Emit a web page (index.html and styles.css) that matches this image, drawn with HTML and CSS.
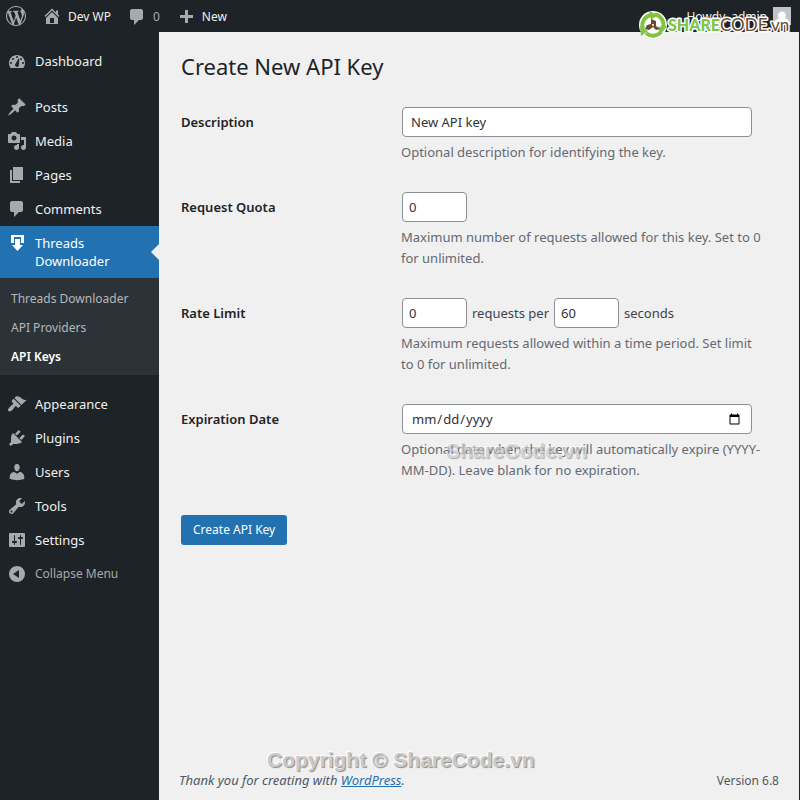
FILE: index.html
```
<!DOCTYPE html>
<html lang="en">
<head>
<meta charset="utf-8">
<title>Create New API Key</title>
<link rel="stylesheet" href="styles.css">
</head>
<body>
<header class="bar">
  <a class="bar-item" href="#" aria-label="About WordPress"><svg class="icon" viewBox="0 0 20 20"><path d="M20 10c0-5.51-4.49-10-10-10C4.48 0 0 4.49 0 10c0 5.52 4.48 10 10 10 5.51 0 10-4.48 10-10zM7.78 15.37L4.37 6.22c.55-.02 1.17-.08 1.17-.08.5-.06.44-1.13-.06-1.11 0 0-1.45.11-2.37.11-.18 0-.37 0-.58-.01C4.12 2.69 6.87 1.11 10 1.11c2.33 0 4.45.87 6.05 2.34-.68-.11-1.65.39-1.65 1.58 0 .74.45 1.36.9 2.1.35.61.55 1.36.55 2.46 0 1.49-1.4 5-1.4 5l-3.03-8.37c.54-.02.82-.17.82-.17.5-.05.44-1.25-.06-1.22 0 0-1.44.12-2.38.12-.87 0-2.33-.12-2.33-.12-.5-.03-.56 1.2-.06 1.22l.92.08 1.26 3.41zM17.41 10c.24-.64.74-1.87.43-4.25.7 1.29 1.05 2.71 1.05 4.25 0 3.29-1.73 6.24-4.4 7.78.97-2.59 1.94-5.2 2.92-7.78zM6.1 18.09C3.12 16.65 1.11 13.53 1.11 10c0-1.3.23-2.48.72-3.59C3.25 10.3 4.67 14.2 6.1 18.09zm4.03-6.63l2.58 6.98c-.86.29-1.76.45-2.71.45-.79 0-1.57-.11-2.29-.33.81-2.38 1.62-4.74 2.42-7.1z"/></svg></a>
  <a class="bar-item" href="#"><svg class="icon" viewBox="0 0 20 20"><path fill-rule="evenodd" d="M16 8.5l1.53 1.53-1.06 1.06L10 4.6l-6.47 6.49-1.06-1.06L10 2.5l4 4v-2h2v4zm-6-2.46l6 5.99V18H4v-5.97zM12 17v-5H8v5h4z"/></svg>Dev WP</a>
  <a class="bar-item bar-count" href="#"><svg class="icon" viewBox="0 0 20 20"><path d="M5 3h9c1.1 0 2 .9 2 2v7c0 1.1-.9 2-2 2h-2l-5 5v-5H5c-1.1 0-2-.9-2-2V5c0-1.1.9-2 2-2z"/></svg>0</a>
  <a class="bar-item" href="#"><svg class="icon" viewBox="0 0 20 20"><path d="M17 9v3h-5v5H9v-5H4V9h5V4h3v5h5z"/></svg>New</a>
  <a class="bar-item bar-user" href="#">Howdy, admin<svg class="avatar" viewBox="0 0 18 18"><path fill="#c3c4c7" d="M0 0h18v18H0z"/><path fill="#fff" d="M1 18c0-4 2-6 5-6.500C4.500 10 4.500 4.500 9 4.500s4.500 5.500 3 7c3 .5 5 2.500 5 6.500z"/></svg></a>
</header>
<div class="layout">
  <nav class="menu">
    <a class="menu-item" href="#"><svg class="icon" viewBox="0 0 20 20"><path fill-rule="evenodd" d="M3.760 17h12.480C17.340 15.630 18 13.900 18 12c0-4.410-3.580-8-8-8s-8 3.590-8 8c0 1.900.66 3.630 1.760 5zM9 6a1 1 0 1 1 2 0 1 1 0 0 1-2 0zM5 8a1 1 0 1 1 2 0 1 1 0 0 1-2 0zM13 8a1 1 0 1 1 2 0 1 1 0 0 1-2 0zM3 12a1 1 0 1 1 2 0 1 1 0 0 1-2 0zM15 12a1 1 0 1 1 2 0 1 1 0 0 1-2 0zM11.500 7.500l.8.300-.4 6.200c0 1.200-.8 2-1.900 2s-2-.8-2-1.900c0-.6.300-1.100.7-1.500z"/></svg>Dashboard</a>
    <a class="menu-item spaced" href="#"><svg class="icon" viewBox="0 0 20 20"><path d="M10.440 3.020l1.820-1.820 6.360 6.350-1.830 1.820c-1.050-.68-2.480-.57-3.410.36l-.75.75c-.92.93-1.040 2.350-.35 3.410l-1.830 1.820-2.410-2.410-2.800 2.790c-.42.42-3.380 2.710-3.800 2.290s1.860-3.390 2.280-3.810l2.790-2.790L4.100 9.360l1.830-1.820c1.050.69 2.480.57 3.400-.36l.75-.75c.93-.92 1.050-2.350.36-3.410z"/></svg>Posts</a>
    <a class="menu-item" href="#"><svg class="icon" viewBox="0 0 20 20"><path fill-rule="evenodd" d="M13 11V4c0-.55-.45-1-1-1h-1.670L9 1H5L3.670 3H2c-.55 0-1 .45-1 1v7c0 .55.45 1 1 1h10c.55 0 1-.45 1-1zM7 4.500c1.380 0 2.500 1.120 2.500 2.500S8.380 9.500 7 9.500 4.500 8.380 4.500 7 5.620 4.500 7 4.500zM14 6h5v10.500c0 1.380-1.120 2.500-2.500 2.500S14 17.880 14 16.500s1.120-2.500 2.500-2.500c.17 0 .34.020.5.050V9h-3zM10 13h2v3.500c0 1.380-1.120 2.500-2.500 2.500S7 17.880 7 16.500 8.120 14 9.500 14c.17 0 .34.020.5.050z"/></svg>Media</a>
    <a class="menu-item" href="#"><svg class="icon" viewBox="0 0 20 20"><path d="M6 15V2h10v13H6zm-1 1h8v2H3V5h2v11z"/></svg>Pages</a>
    <a class="menu-item" href="#"><svg class="icon" viewBox="0 0 20 20"><path d="M5 2h9c1.100 0 2 .9 2 2v7c0 1.100-.9 2-2 2h-2l-5 5v-5H5c-1.100 0-2-.9-2-2V4c0-1.100.9-2 2-2z"/></svg>Comments</a>
    <a class="menu-item current" href="#"><svg class="icon" viewBox="0 0 20 20"><path d="M4 2h13v8h-3V4H7v6H4z"/><path d="M8 6h5v6h3l-5.500 6L5 12h3z"/></svg>Threads Downloader</a>
    <div class="submenu">
      <a href="#">Threads Downloader</a>
      <a href="#">API Providers</a>
      <a class="active" href="#">API Keys</a>
    </div>
    <a class="menu-item spaced" href="#"><svg class="icon" viewBox="0 0 20 20"><path d="M14.480 11.060L7.410 3.990l1.500-1.500c.5-.56 2.300-.47 3.510.32 1.210.8 1.430 1.280 2.910 2.100 1.180.64 2.450 1.260 4.450.85zm-.71.71L6.700 4.700 4.930 6.470c-.39.39-.39 1.020 0 1.410l1.060 1.060c.39.39.39 1.030 0 1.420-.6.6-1.430 1.110-2.210 1.690-.35.26-.7.53-1.010.84C1.430 14.230.4 16.080 1.400 17.070c.99 1 2.840-.03 4.180-1.360.31-.31.58-.66.85-1.020.57-.78 1.080-1.610 1.690-2.210.39-.39 1.020-.39 1.410 0l1.060 1.060c.39.39 1.020.39 1.410 0z"/></svg>Appearance</a>
    <a class="menu-item" href="#"><svg class="icon" viewBox="0 0 20 20"><path d="M13.110 4.360L9.870 7.600 8 5.730l3.240-3.240c.35-.34 1.050-.2 1.560.32.52.51.66 1.210.31 1.550zm-8 1.770l.91-1.120 9.010 9.010-1.190.84c-.71.71-2.630 1.160-3.820 1.160H6.140L4.900 17.260c-.59.59-1.540.59-2.120 0-.59-.58-.59-1.530 0-2.120l1.240-1.240v-3.880c0-1.130.4-3.190 1.090-3.890zm7.260 3.970l3.240-3.240c.34-.35 1.040-.21 1.550.31.52.51.66 1.210.31 1.550l-3.240 3.250z"/></svg>Plugins</a>
    <a class="menu-item" href="#"><svg class="icon" viewBox="0 0 20 20"><path d="M10 9.250c-2.270 0-2.730-3.440-2.730-3.440C7 4.020 7.820 2 9.970 2c2.160 0 2.980 2.020 2.710 3.810 0 0-.41 3.440-2.680 3.440zm0 2.570L12.720 10c2.390 0 4.520 2.330 4.520 4.530v2.490s-3.650 1.130-7.240 1.130c-3.650 0-7.240-1.130-7.240-1.130v-2.490c0-2.250 1.940-4.480 4.470-4.480z"/></svg>Users</a>
    <a class="menu-item" href="#"><svg class="icon" viewBox="0 0 20 20"><path fill-rule="evenodd" d="M16.680 9.770c-1.340 1.340-3.300 1.670-4.950.99l-5.410 6.520c-.99.99-2.590.99-3.580 0s-.99-2.590 0-3.570l6.520-5.420c-.68-1.650-.35-3.610.99-4.950 1.280-1.280 3.120-1.620 4.720-1.060l-2.890 2.890 2.820 2.820 2.860-2.870c.53 1.580.18 3.390-1.080 4.650zM3.810 16.210c.4.39 1.040.39 1.430 0 .4-.4.4-1.040 0-1.430-.39-.4-1.030-.4-1.430 0-.39.39-.39 1.030 0 1.430z"/></svg>Tools</a>
    <a class="menu-item" href="#"><svg class="icon" viewBox="0 0 20 20"><path fill-rule="evenodd" d="M18 16V4c0-.55-.45-1-1-1H3c-.55 0-1 .45-1 1v12c0 .55.45 1 1 1h14c.55 0 1-.45 1-1zM8 11h1c.55 0 1 .45 1 1s-.45 1-1 1H8v1.500c0 .28-.22.5-.5.5s-.5-.22-.5-.5V13H6c-.55 0-1-.45-1-1s.45-1 1-1h1V5.500c0-.28.22-.5.5-.5s.5.22.5.5V11zm5-2h-1c-.55 0-1-.45-1-1s.45-1 1-1h1V5.500c0-.28.22-.5.5-.5s.5.22.5.5V7h1c.55 0 1 .45 1 1s-.45 1-1 1h-1v5.500c0 .28-.22.5-.5.5s-.5-.22-.5-.5z"/></svg>Settings</a>
    <button class="menu-item collapse" type="button"><svg class="icon" viewBox="0 0 20 20"><path fill-rule="evenodd" d="M10 2a8 8 0 1 0 0 16 8 8 0 0 0 0-16zm2 4v8l-6-4z"/></svg>Collapse Menu</button>
  </nav>
  <main class="content">
    <h1>Create New API Key</h1>
    <form>
      <div class="fields">
        <label for="description">Description</label>
        <div class="field">
          <input class="wide" id="description" type="text" value="New API key">
          <p>Optional description for identifying the key.</p>
        </div>
        <label for="quota">Request Quota</label>
        <div class="field">
          <input class="small" id="quota" type="number" value="0">
          <p>Maximum number of requests allowed for this key. Set to 0 for unlimited.</p>
        </div>
        <label for="rate">Rate Limit</label>
        <div class="field">
          <div class="inline">
            <input class="small" id="rate" type="number" value="0">
            <label for="period">requests per</label>
            <input class="small" id="period" type="number" value="60">
            <span>seconds</span>
          </div>
          <p>Maximum requests allowed within a time period. Set limit to 0 for unlimited.</p>
        </div>
        <label for="expires">Expiration Date</label>
        <div class="field">
          <input class="wide" id="expires" type="date">
          <p>Optional date when the key will automatically expire (YYYY-MM-DD). Leave blank for no expiration.</p>
        </div>
      </div>
      <button class="primary" type="submit">Create API Key</button>
    </form>
    <footer class="footer">
      <em>Thank you for creating with <a href="#">WordPress</a>.</em>
      <span>Version 6.8</span>
    </footer>
  </main>
</div>
<svg class="brand" viewBox="0 0 154 32" role="img" aria-label="ShareCode.vn">
  <circle cx="15" cy="17" r="14" fill="#fff"/>
  <g fill="none" stroke="#82c341" stroke-width="4">
    <path d="M5 21A10.500 10.500 0 0 1 13 7"/>
    <path d="M17 6.500A10.500 10.500 0 0 1 25 20"/>
    <path d="M23 24A10.500 10.500 0 0 1 8 25"/>
  </g>
  <g fill="#82c341"><path d="M11 3l9 4-7 5z"/><path d="M29 18l-6 8-4-7z"/><path d="M3 28l-1-10 8 5z"/></g>
  <path fill="#6b4a35" d="M13 11l5 2v5l4 3-4 1-3-3-4 3-4-1 2-4 4-1z"/>
  <circle cx="15" cy="17" r="1" fill="#fff"/>
  <text class="brand-text" x="30" y="23"><tspan class="bold">SHARE</tspan>CODE.vn</text>
</svg>
<div class="mark mark-middle">ShareCode.vn</div>
<div class="mark mark-bottom">Copyright © ShareCode.vn</div>
</body>
</html>
```
FILE: styles.css
```
* { box-sizing: border-box; }

body {
  margin: 0;
  min-height: 100vh;
  position: relative;
  display: flex;
  flex-direction: column;
  background: #1d2327;
  color: #3c434a;
  font: 13px/21px "Noto Sans", "Open Sans", sans-serif;
}

a { color: #2271b1; }

.icon {
  flex: none;
  width: 20px;
  height: 20px;
  fill: #a7aaad;
}

.bar {
  display: flex;
  height: 32px;
  padding: 0 9px 0 6px;
  gap: 16px;
  background: #1d2327;
}

.bar-item {
  display: flex;
  align-items: center;
  gap: 6px;
  color: #f0f0f1;
  font-size: 12px;
  text-decoration: none;
}

.bar-count { color: #a7aaad; }
.bar-user { margin-left: auto; }
.avatar { width: 18px; height: 18px; }

.layout {
  flex: 1;
  display: flex;
}

.menu {
  flex: none;
  width: 159px;
  padding-top: 12px;
}

.menu-item {
  position: relative;
  display: flex;
  gap: 8px;
  width: 100%;
  padding: 8px 40px 8px 7px;
  border: 0;
  background: none;
  color: #f0f0f1;
  font: 13px/18px "Noto Sans", "Open Sans", sans-serif;
  text-align: left;
  text-decoration: none;
}

.menu-item .icon { margin: -1px 0; }
.spaced { margin-top: 12px; }

.current { background: #2271b1; color: #fff; }
.current .icon { fill: #fff; }

.current::after {
  content: "";
  position: absolute;
  right: 0;
  top: 50%;
  margin-top: -8px;
  border: 8px solid transparent;
  border-right-color: #f0f0f1;
  border-left-width: 0;
}

.submenu {
  padding: 6px 0 4px;
  background: #2c3338;
}

.submenu a {
  display: block;
  padding: 0 11px;
  color: #b5b8bb;
  font-size: 12px;
  line-height: 29px;
  text-decoration: none;
}

.submenu .active { color: #fff; font-weight: 600; }
.collapse { padding-right: 0; color: #a7aaad; font-size: 12px; }

.content {
  flex: 1;
  display: flex;
  flex-direction: column;
  margin-right: 1px;
  padding: 20px 20px 9px 22px;
  background: #f0f0f1;
}

h1 {
  margin: 0;
  color: #1d2327;
  font-size: 22px;
  font-weight: 400;
  line-height: 28px;
}

.fields {
  display: grid;
  grid-template-columns: 200px 1fr;
  column-gap: 20px;
  row-gap: 29px;
  padding: 27px 14px 34px 0;
}

.fields > label {
  color: #1d2327;
  font-weight: 600;
  line-height: 30px;
}

.field p { margin: 5px 0 0; color: #646970; }

input {
  display: block;
  height: 30px;
  margin: 0 1px;
  padding: 0 8px;
  border: 1px solid #8c8f94;
  border-radius: 4px;
  background: #fff;
  color: #2c3338;
  font: 13px/28px "Noto Sans", "Open Sans", sans-serif;
}

.wide { width: 350px; max-width: 100%; }
.small { width: 65px; padding: 0 6px; }

.inline {
  display: flex;
  align-items: center;
  gap: 4px;
}

.primary {
  height: 30px;
  padding: 0 12px;
  border: 0;
  border-radius: 3px;
  background: #2271b1;
  color: #fff;
  font: 12px/30px "Noto Sans", "Open Sans", sans-serif;
}

.footer {
  display: flex;
  justify-content: space-between;
  margin: auto 0 0 -2px;
  color: #50575e;
  font-size: 12px;
}

.footer em { font-size: 13px; }

.brand {
  position: absolute;
  top: 8px;
  right: 8px;
  width: 154px;
  height: 32px;
  font: 17px Lato, sans-serif;
}

.brand-text {
  fill: #6b4a35;
  stroke: #fff;
  stroke-width: 3px;
  stroke-linejoin: round;
  paint-order: stroke;
}
.brand .bold { font-size: 16px; font-weight: 900; fill: #82c341; }

.mark {
  position: absolute;
  color: #c9cacc;
  font: bold 21px/24px "Liberation Sans", sans-serif;
  text-shadow: 1px 1px 1px #8a8c8f, -1px -1px 1px #fff;
  white-space: nowrap;
  pointer-events: none;
}

.mark-middle { left: 446px; top: 439px; opacity: 0.7; }
.mark-bottom { left: 267px; bottom: 28px; }
```
